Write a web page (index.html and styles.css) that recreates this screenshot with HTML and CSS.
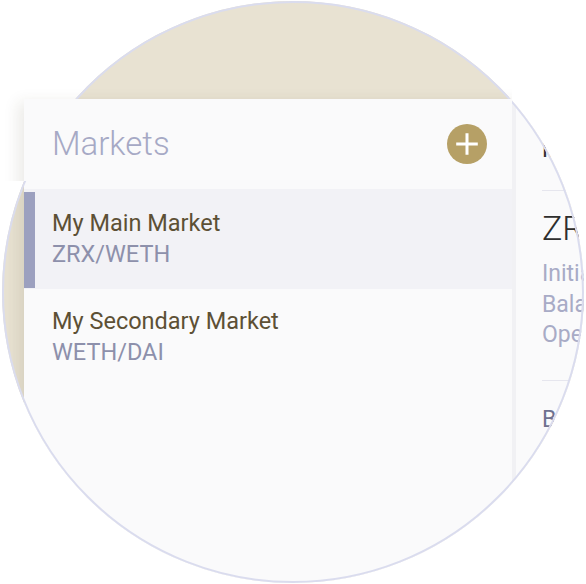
FILE: index.html
```html
<!DOCTYPE html>
<html lang="en">
<head>
<meta charset="utf-8">
<title>Markets</title>
<link rel="stylesheet" href="styles.css">
</head>
<body>
<div class="stage">
  <div class="disc"></div>
  <div class="clip">
    <div class="card">
      <aside class="markets">
        <header class="markets-head">
          <h1 class="markets-title">Markets</h1>
          <button class="add" type="button" aria-label="Add market">
            <svg width="40" height="40" viewBox="0 0 40 40" aria-hidden="true">
              <circle cx="20" cy="20" r="20" fill="#b6a066"/>
              <path d="M20 9.2V30.8M9.2 20H30.8" stroke="#ffffff" stroke-width="3" fill="none"/>
            </svg>
          </button>
        </header>
        <ul class="market-list">
          <li class="market active">
            <span class="bar"></span>
            <div class="info">
              <div class="name">My Main Market</div>
              <div class="pair">ZRX/WETH</div>
            </div>
          </li>
          <li class="market">
            <div class="info">
              <div class="name">My Secondary Market</div>
              <div class="pair">WETH/DAI</div>
            </div>
          </li>
        </ul>
      </aside>
      <div class="split"></div>
      <section class="detail">
        <div class="detail-head">My Main Market</div>
        <div class="summary">
          <div class="summary-pair">ZRX/WETH</div>
          <div class="summary-line">Initial price</div>
          <div class="summary-line">Balance</div>
          <div class="summary-line">Open orders</div>
        </div>
        <div class="section-label">Buy orders</div>
      </section>
    </div>
  </div>
  <div class="ring"></div>
</div>
</body>
</html>
```

FILE: styles.css
```css
* { box-sizing: border-box; }

html, body {
  margin: 0;
  padding: 0;
  background: #ffffff;
}

body {
  font-family: Roboto, "Liberation Sans", sans-serif;
}

.stage {
  position: relative;
  width: 586px;
  height: 584px;
  overflow: hidden;
}

.disc {
  position: absolute;
  left: 2px;
  top: 1px;
  width: 582px;
  height: 582px;
  border-radius: 50%;
  background: #e8e2d2;
}

.clip {
  position: absolute;
  inset: 0;
  clip-path: path('M0 0 H512 V181 H0 Z M2 292 A291 291 0 1 1 584 292 A291 291 0 1 1 2 292 Z');
}

.card {
  position: absolute;
  left: 24px;
  top: 99px;
  width: 620px;
  height: 520px;
  display: flex;
  background: #fafafb;
  box-shadow: -6px 3px 14px rgba(70, 55, 25, 0.10);
}

.ring {
  position: absolute;
  left: 2px;
  top: 1px;
  width: 582px;
  height: 582px;
  border-radius: 50%;
  border: 2px solid #dadcee;
  clip-path: path(evenodd, 'M-10 -10 H600 V600 H-10 Z M22 98 H510 V180 H22 Z');
}

/* Markets panel */
.markets {
  width: 488px;
  flex: none;
  background: #fafafb;
}

.markets-head {
  height: 90px;
  display: flex;
  align-items: center;
  justify-content: space-between;
  padding: 0 25px 0 28px;
}

.markets-title {
  margin: 0;
  font-size: 33px;
  font-weight: 300;
  color: #a6a9c5;
  line-height: 40px;
}

.add {
  width: 40px;
  height: 40px;
  padding: 0;
  border: 0;
  background: none;
  display: block;
}

.add svg { display: block; }

.market-list {
  list-style: none;
  margin: 0;
  padding: 0;
}

.market {
  height: 100px;
  display: flex;
  padding-top: 17px;
}

.market .info {
  padding-left: 28px;
}

.market.active {
  background: #f2f2f6;
  padding-top: 0;
}

.market.active .bar {
  width: 11px;
  flex: none;
  margin: 3px 0 1px;
  background: #9ca0bf;
}

.market.active .info {
  padding-left: 17px;
  padding-top: 19px;
}

.name {
  font-size: 23.5px;
  line-height: 31px;
  color: #5d5035;
}

.pair {
  font-size: 23.5px;
  line-height: 31px;
  color: #8d90ab;
}

.split {
  width: 4px;
  flex: none;
  background: #f1f1f4;
}

/* Detail panel */
.detail {
  flex: 1;
  padding-left: 26px;
  white-space: nowrap;
}

.detail-head {
  height: 92px;
  padding-top: 36px;
  font-size: 23px;
  line-height: 30px;
  color: #333333;
  border-bottom: 1px solid #e6e6ee;
}

.summary {
  height: 190px;
  padding-top: 17px;
  border-bottom: 1px solid #e6e6ee;
}

.summary-pair {
  font-size: 34px;
  font-weight: 300;
  line-height: 40px;
  color: #2e2e2e;
  margin-bottom: 11px;
}

.summary-line {
  font-size: 23px;
  line-height: 30.5px;
  color: #a8abc6;
}

.section-label {
  padding-top: 24px;
  font-size: 23px;
  line-height: 30px;
  color: #6e7190;
}
```
